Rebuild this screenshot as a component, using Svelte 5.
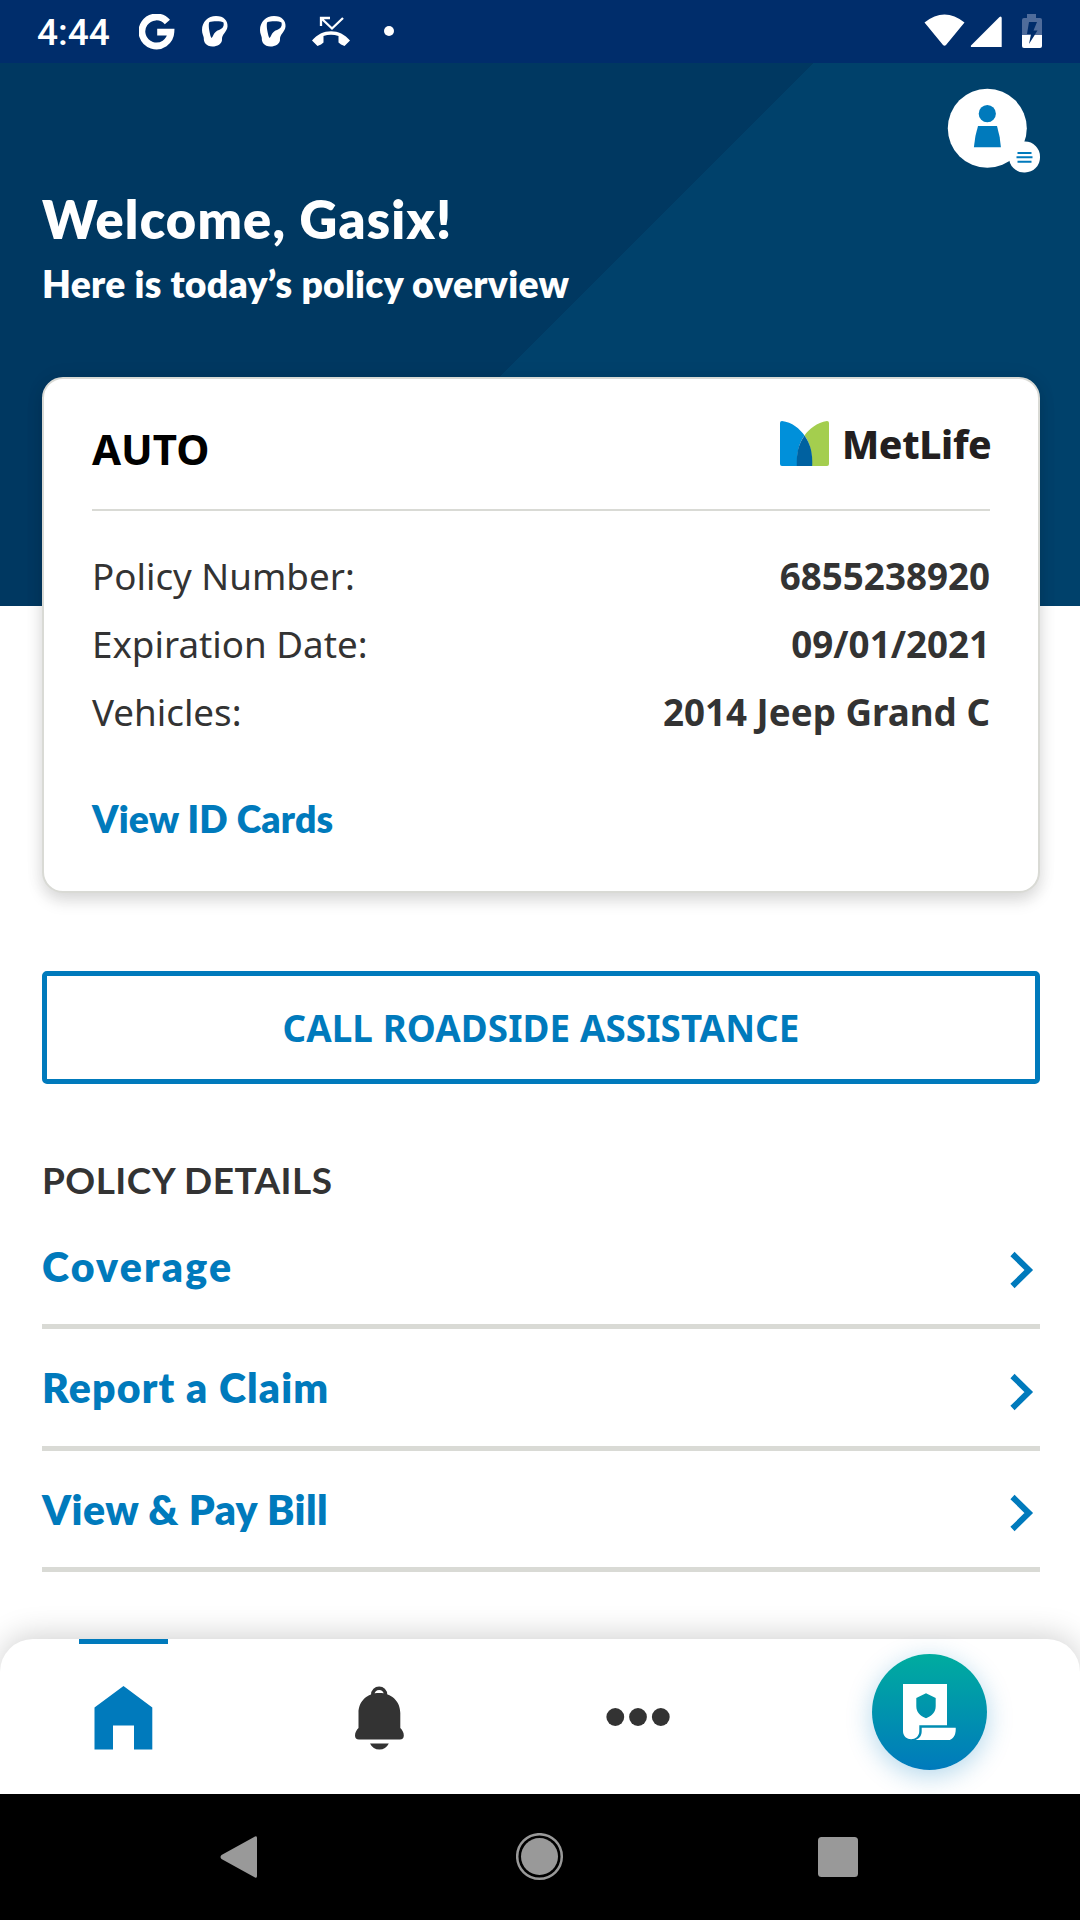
<script>
  const policy = [
    { label: 'Policy Number:', value: '6855238920' },
    { label: 'Expiration Date:', value: '09/01/2021' },
    { label: 'Vehicles:', value: '2014 Jeep Grand C' }
  ];
  const links = [
    { text: 'Coverage', cls: 'coverage' },
    { text: 'Report a Claim', cls: 'claim' },
    { text: 'View & Pay Bill', cls: 'bill' }
  ];
</script>

<div class="screen">
  <header class="status">
    <span class="time">4:44</span>
    <svg class="g" width="36" height="36" viewBox="0 0 36 36"><path d="M28.400 8A14.500 14.500 0 1 0 31.900 18.200H18.200" fill="none" stroke="#fff" stroke-width="6.800" /></svg>
    {#each [0, 1] as i (i)}
      <svg class="ring" width="26" height="31" viewBox="0 0 26 31"><path fill="#fff" fill-rule="evenodd" d="M14 0C22 0 26 5 25.500 10.500C25 16 20 18 20 23C20.500 28 15 30.500 10.500 30.500C4 30.500 1.500 26 1.800 22C1.500 19.500 0 18 0 14C0 6 6 0 14 0ZM7.500 6C6 7 7 16 9.300 22C11 21.500 11.500 16.500 15.500 14.500C20 13 22.500 11 21.500 6.500C20 5 11 5 7.500 6Z" /></svg>
    {/each}
    <svg class="missed" width="40" height="32" viewBox="0 0 40 32"><path d="M2 10V2h9M2.500 2.500L13 12.500 24 2" fill="none" stroke="#fff" stroke-width="2.300" transform="translate(8 0)" /><path fill="#fff" d="M1 24.500C11 12 29 12 39 24.500L33.500 30Q29.500 28.500 27.500 26.500V20Q20 17.500 12.500 20V26.500Q10.500 28.500 6.500 30Z" /></svg>
    <i class="dot"></i>
    <svg class="sys" width="118" height="36" viewBox="0 0 118 36">
      <path fill="#fff" d="M.5 8.500Q20.500-7.500 40.500 8.500L22 31Q20.500 32.500 19 31ZM77.700 4V33H47Q46.500 31.500 47.500 31L75.500 3Q77.500 1.500 77.700 4Z" />
      <path fill="#4f6c9b" d="M103 0h9v4h4q2 0 2 2v15H98V6q0-2 2-2h3z" /><path fill="#fff" d="M98 21h20v11q0 2-2 2h-16q-2 0-2-2z" />
      <path fill="#002d6b" d="M105 8h8l-3.500 8.500h4L105 30l2-10h-4z" />
    </svg>
  </header>

  <section class="hero">
    <svg class="avatar" width="80" height="80" viewBox="0 0 80 80">
      <circle cx="40.300" cy="40.300" r="39.500" fill="#fff" /><circle cx="40.300" cy="25.700" r="8.600" fill="#007abc" />
      <path fill="#007abc" d="M31 38H50Q53.300 49 53.900 59.300H26.900Q27.800 47.800 31 38Z" />
    </svg>
    <svg class="badge" width="31" height="32" viewBox="0 0 31 32"><rect width="31" height="31" rx="15" y=".5" fill="#fff" /><path d="M8.500 12h14M7.500 16.200h16M8.500 20.800h14" stroke="#007abc" stroke-width="1.900" /></svg>
    <h1>Welcome, Gasix!</h1>
    <h2>Here is today’s policy overview</h2>
  </section>

  <main>
    <section class="card">
      <div class="cardhead">
        <span class="auto">AUTO</span>
        <div class="brand">
          <svg width="49" height="45" viewBox="0 0 49 45"><path fill="#0090da" d="M0 2Q0 0 2 0C12 1 20 8 24.500 14.500C19 22 17 30 17 45H2Q0 45 0 43Z" /><path fill="#a4ce4e" d="M49 2Q49 0 47 0C37 1.500 29 8 24.500 14.500C30 22 32 30 32 45H47Q49 45 49 43Z" /><path fill="#0061a0" d="M24.500 14.500C18.500 23 16.300 32 16.800 45H32.200C32.700 32 30.500 23 24.500 14.500Z" /></svg>
          <span>MetLife</span>
        </div>
      </div>
      {#each policy as p (p.label)}
        <div class="row"><span>{p.label}</span><b>{p.value}</b></div>
      {/each}
      <span class="cards">View ID Cards</span>
    </section>

    <button class="roadside">CALL ROADSIDE ASSISTANCE</button>

    <h3>POLICY DETAILS</h3>
    {#each links as l (l.text)}
      <div class="link {l.cls}">
        <span>{l.text}</span>
        <svg width="24" height="38" viewBox="0 0 24 38"><path d="M2.500 3L18.800 19 2.500 35" fill="none" stroke="#007abc" stroke-width="6" /></svg>
      </div>
    {/each}
  </main>

  <nav class="tabs">
    <div class="home"><svg width="60" height="64" viewBox="0 0 60 64"><path fill="#007abc" d="M30.500 0L59.300 21.500V63.500H41V39.500H20V63.500H1.500V21.500Z" /></svg></div>
    <div class="bell"><svg width="50" height="64" viewBox="0 0 50 64"><path d="M17.800 9C17.300 0 31 0 30.500 9" fill="none" stroke="#333" stroke-width="3.500" /><path fill="#333" d="M24.300 7C36.300 7 45.300 15 45.300 27V42C47.300 44 48.800 46.500 48.800 49.500Q48.800 53.500 44.800 53.500H4Q0 53.500 0 49.500C0 46.500 1.500 44 3.500 42V27C3.500 15 12.300 7 24.300 7ZM15 57.500H33.800Q30.800 63.500 24.400 63.500Q18 63.500 15 57.500Z" /></svg></div>
    <div class="more"><svg width="64" height="18" viewBox="0 0 64 18" fill="#333"><circle cx="9.300" cy="9" r="8.900" /><circle cx="32" cy="9" r="8.900" /><circle cx="54.800" cy="9" r="8.900" /></svg></div>
    <div class="fab"><svg width="53" height="56" viewBox="0 0 53 56"><path fill="#fff" fill-rule="evenodd" d="M0 0H44V41.300H16.300V47C16.300 58 0 58 0 47ZM23 9.200L13.300 14V22C13.300 28 17 32 23 34.300C29 32 32.700 28 32.700 22V14Z" /><path fill="#fff" d="M18.700 43.700H52.700C53.200 51 50 56 45 56H12.500C17 54.500 18.700 51 18.700 47Z" /></svg></div>
  </nav>

  <footer>
    <svg width="38" height="44" viewBox="0 0 38 44"><path fill="#999" d="M35 1.500Q37 .5 37 3V41Q37 43.500 35 42.500L1.500 24Q-.5 22 1.500 20Z" /></svg>
    <svg class="homekey" width="48" height="48" viewBox="0 0 48 48"><circle cx="23.500" cy="23.500" r="22.300" fill="none" stroke="#999" stroke-width="2.500" /><circle cx="23.500" cy="23.500" r="18.500" fill="#999" /></svg>
    <svg width="40" height="40" viewBox="0 0 40 40"><rect width="40" height="40" rx="3.500" fill="#999" /></svg>
  </footer>
</div>

<style>
  :global(body) { margin: 0; background: #fff; }
  * { box-sizing: border-box; }
  svg { display: block; flex: none; }
  .screen { width: 1080px; height: 1920px; display: flex; flex-direction: column; overflow: hidden; font-family: Lato, "Noto Sans", sans-serif; color: #333; background: #fff; }
  .status { flex: none; height: 63px; background: #002d6b; display: flex; align-items: flex-start; padding-left: 37px; }
  .time { width: 101px; font: 500 37px/44px Roboto, sans-serif; color: #fff; padding-top: 11px; }
  .g { margin: 14px 27px 0 1px; }
  .ring { margin: 16px 32px 0 0; }
  .missed { margin: 16px 0 0 -7px; }
  .dot { width: 10px; height: 10px; border-radius: 50%; background: #fff; margin: 26px 0 0 33px; }
  .sys { margin: 14px 38px 0 auto; }
  .hero { position: relative; flex: none; height: 543px; padding: 124px 42px 0; background: linear-gradient(135deg, #003861 0 575px, #00416b 575px); color: #fff; }
  .avatar { position: absolute; left: 947px; top: 25px; }
  .badge { position: absolute; left: 1009px; top: 78px; }
  h1 { margin: 0; font-size: 52.300px; line-height: 64px; font-weight: 800; letter-spacing: 1.200px; }
  h2 { margin: 9px 0 0; font-size: 37.300px; line-height: 48px; font-weight: 800; letter-spacing: .270px; }
  main { flex: 1; padding: 0 40px 0 42px; margin-top: -229px; position: relative; }
  .card { height: 516px; border: 2px solid #d9dad5; border-radius: 21px; padding: 0 48px; background: #fff; box-shadow: 0 8px 16px rgba(0, 0, 0, .13), 0 0 20px rgba(0, 0, 0, .06); }
  .cardhead { height: 132px; border-bottom: 2px solid #d9dad5; margin-bottom: 31px; padding-top: 42px; display: flex; justify-content: space-between; align-items: flex-start; }
  .auto { font: 700 42px/58px "Noto Sans", sans-serif; color: #000; margin-top: -1px; }
  .brand { display: flex; gap: 13px; width: 210px; color: #231f20; white-space: nowrap; }
  .brand span { font: 800 39px/46px "Noto Sans", sans-serif; letter-spacing: -.350px; }
  .row { display: flex; justify-content: space-between; font: 36.750px/68px "Noto Sans", sans-serif; }
  .cards { display: block; margin: 49px 0 0; font-size: 37.300px; line-height: 48px; font-weight: 800; letter-spacing: .180px; color: #007abc; }
  .roadside { display: block; width: 100%; height: 113px; margin: 78px 0 0; padding: 0; border: 5px solid #007abc; border-radius: 5px; background: #fff; color: #007abc; font: 700 36.750px/50px "Noto Sans", sans-serif; letter-spacing: .100px; }
  h3 { margin: 72px 0 3.500px; font-size: 37px; line-height: 48px; font-weight: 700; letter-spacing: .450px; }
  .link { display: flex; justify-content: space-between; align-items: center; height: 121.500px; padding: 8.500px 6px 0 0; border-bottom: 5px solid #d9dad5; font-size: 41px; line-height: 50px; font-weight: 800; color: #007abc; }
  .link span { margin-bottom: 7px; }
  .coverage { letter-spacing: 2.250px; }
  .claim { letter-spacing: 1.150px; }
  .bill { letter-spacing: .450px; }
  .tabs { flex: none; height: 155px; border-radius: 33px 33px 0 0; background: #fff; box-shadow: 0 -4px 30px rgba(0, 0, 0, .18); position: relative; display: flex; align-items: flex-start; }
  .home { margin-left: 79px; width: 89px; height: 155px; border-top: 5px solid #007abc; padding: 42px 0 0 14px; }
  .bell { margin: 47px 0 0 187px; }
  .more { margin: 69px 0 0 201px; }
  .fab { width: 115px; height: 116px; margin: 15px 0 0 202px; border-radius: 50%; background: linear-gradient(#00ac9f, #007abc); box-shadow: 0 6px 26px rgba(0, 122, 188, .3); padding: 30px 0 0 31px; }
  footer { flex: none; height: 126px; background: #000; display: flex; justify-content: space-between; align-items: center; padding: 0 222px 0 220px; }
  .homekey { margin-left: 4px; }
</style>
